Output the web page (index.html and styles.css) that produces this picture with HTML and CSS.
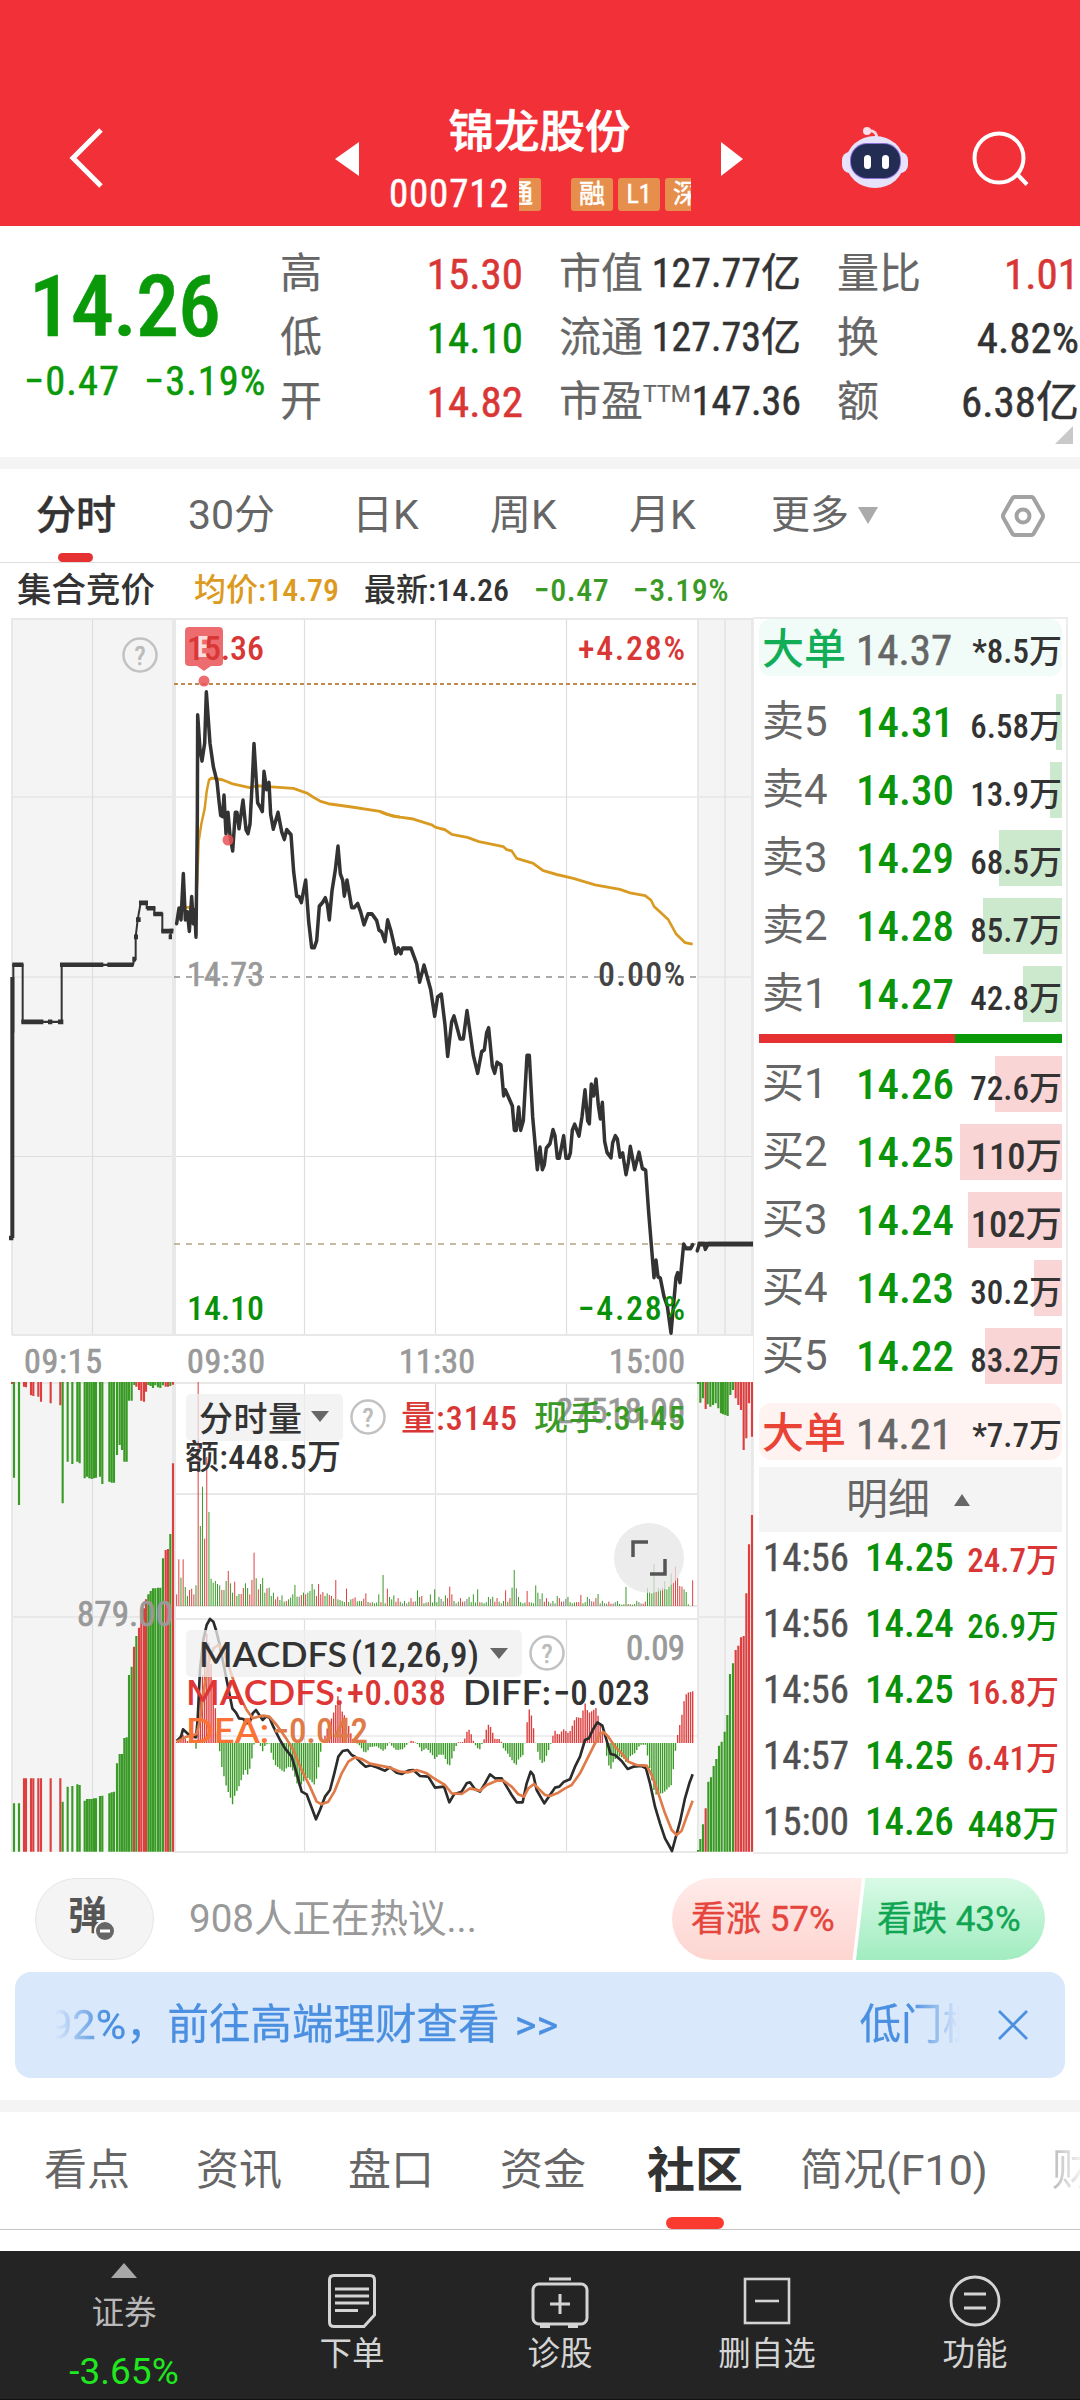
FILE: index.html
```
<!DOCTYPE html>
<html lang="zh-CN">
<head>
<meta charset="utf-8">
<title>锦龙股份 000712</title>
<link rel="stylesheet" href="styles.css">
</head>
<body>
<div class="app">
  <header class="header">
    <svg class="back" width="36" height="64" viewBox="0 0 36 64"><path d="M32 4L4 32L32 60" fill="none" stroke="#fff" stroke-width="5"/></svg>
    <svg class="prev" width="24" height="34" viewBox="0 0 24 34"><path d="M24 0V34L0 17Z" fill="#fff"/></svg>
    <div class="stock">
      <h1 class="stock-name">锦龙股份</h1>
      <div class="stock-sub">
        <span class="code">000712</span>
        <div class="tags"><span class="tag tag-first">通</span><span class="tag">融</span><span class="tag">L1</span><span class="tag">深</span></div>
      </div>
    </div>
    <svg class="next" width="22" height="34" viewBox="0 0 22 34"><path d="M0 0V34L22 17Z" fill="#fff"/></svg>
    <svg class="robot" width="68" height="64" viewBox="0 0 68 64">
      <path d="M26 5Q36 3 36 14" fill="none" stroke="#f6d5e2" stroke-width="3"/><circle cx="26" cy="5" r="4" fill="#f9dfe9"/>
      <rect x="1" y="26" width="66" height="21" rx="8" fill="#e9e4fb"/>
      <ellipse cx="34" cy="36" rx="29" ry="26" fill="#e6e2fa"/>
      <rect x="9" y="17" width="51" height="36" rx="17" fill="#8d6fd8"/>
      <rect x="10" y="18" width="49" height="34" rx="16" fill="#232c52"/>
      <rect x="23" y="29" width="7" height="14" rx="3.500" fill="#fff"/><rect x="41" y="29" width="7" height="14" rx="3.500" fill="#fff"/>
    </svg>
    <svg class="search" width="60" height="60" viewBox="0 0 60 60"><g fill="none" stroke="#fff" stroke-width="4"><circle cx="28" cy="28" r="24.500"/><path d="M45 43L56 54.500"/></g></svg>
  </header>

  <section class="quote">
    <div class="quote-main">
      <div class="last">14.26</div>
      <div class="change"><span>−0.47</span><span>−3.19%</span></div>
    </div>
    <dl class="stats">
      <div class="stat"><dt>高</dt><dd class="up">15.30</dd></div>
      <div class="stat"><dt>市值</dt><dd class="cap">127.77亿</dd></div>
      <div class="stat"><dt>量比</dt><dd class="up">1.01</dd></div>
      <div class="stat"><dt>低</dt><dd class="down">14.10</dd></div>
      <div class="stat"><dt>流通</dt><dd class="cap">127.73亿</dd></div>
      <div class="stat"><dt>换</dt><dd>4.82%</dd></div>
      <div class="stat"><dt>开</dt><dd class="up">14.82</dd></div>
      <div class="stat"><dt>市盈<sup>TTM</sup></dt><dd class="cap">147.36</dd></div>
      <div class="stat"><dt>额</dt><dd>6.38亿</dd></div>
    </dl>
    <svg class="corner" width="18" height="18" viewBox="0 0 18 18"><path d="M18 0V18H0Z" fill="#c9c9c9"/></svg>
  </section>

  <nav class="periods">
    <span class="period active">分时</span>
    <span class="period">30分</span>
    <span class="period">日K</span>
    <span class="period">周K</span>
    <span class="period">月K</span>
    <span class="period more">更多<svg width="20" height="17" viewBox="0 0 20 17"><path d="M0 0H20L10 17Z" fill="#aaa"/></svg></span>
    <svg class="gear" width="46" height="44" viewBox="0 0 46 44"><g fill="none" stroke="#a2a2a2" stroke-width="4"><path d="M14 3H32Q33 3 34 5L42.500 20Q43.500 22 42.500 24L34 39Q33 41 32 41H14Q13 41 12 39L3.500 24Q2.500 22 3.500 20L12 5Q13 3 14 3Z"/><circle cx="23" cy="22" r="6.500"/></g></svg>
  </nav>

  <div class="legend">
    <span class="legend-title">集合竞价</span>
    <span class="avg">均价:14.79</span>
    <span class="newest">最新:14.26</span>
    <span class="delta">−0.47</span>
    <span class="pct">−3.19%</span>
  </div>

  <main class="board">
    <svg class="chart" width="753" height="1238" viewBox="0 618 753 1238">
      <g fill="#f4f4f4">
        <path d="M12 619H174V1335H12ZM697 619H753V1335H697ZM12 1383H174V1852H12ZM697 1383H753V1852H697Z"/>
      </g>
      <g stroke="#dedede" stroke-width="1.200" fill="none">
        <path d="M92.500 619V1335M92.500 1383V1852M304.500 619V1335M304.500 1383V1606M304.500 1619V1852M435.500 619V1335M435.500 1383V1606M435.500 1619V1852M566.500 619V1335M566.500 1383V1606M566.500 1619V1852M725 619V1335M725 1383V1852"/>
        <path d="M12 797H753M12 977H174M697 977H753M12 1156.500H753M174 1736H697"/>
      </g>
      <g stroke="#e8e8e8" stroke-width="2" fill="none">
        <path d="M11 619H753M12 619V1335M12 1335H753M698 619V1335M752 619V1335M11 1383H753M12 1383V1852M698 1383V1852M752 1383V1852M174 1494H697M174 1606H697M174 1619H697M174 1852H697M12 1617H174M697 1617H753"/>
        <path d="M174 619V1335M174 1383V1852" stroke-width="4"/>
      </g>
      <path d="M174 684H697" stroke="#c08a4e" stroke-width="2" stroke-dasharray="4 3"/>
      <path d="M174 977H697" stroke="#8f8f8f" stroke-width="1.700" stroke-dasharray="6 6"/>
      <path d="M174 1244H697" stroke="#b5a284" stroke-width="1.700" stroke-dasharray="6 6"/>

      <g font-size="34" class="num firm">
        <text x="187" y="986" fill="#999" stroke="#999" textLength="77">14.73</text>
      </g>

      <g class="line">
        <g transform="translate(0 780) scale(.333333 .382653)">
          <path class="avg-line" d="M555 333H570L585 380L592 260L596 160L604 115L614 75L620 30L627 0L635 -5L647 -4L669 0L698 10L749 20L771 15L814 18L880 22L923 35L940 45L960 55L985 62L1050 70L1140 82L1180 95L1200 97"/>
          <path class="price-line" d="M530 375L537 335L543 365L550 245L556 365L562 345L568 395L575 305L580 375L584 340L588 410L592 100L593 -170L600 -80L606 -50L614 -96L619 -230L630 -96L640 -35L651 4L657 55L662 92L668 95L672 40L678 140L684 85L690 145L698 185L706 85L711 85L717 127L729 53L738 130L744 140L750 115L757 0L762 -95L773 60L780 70L787 82L792 -22L800 25L807 7L812 90L820 128L834 85L845 135L853 155L860 130L873 143L881 240L890 303L897 305L904 320L917 262L926 370L935 438L943 438L950 420L958 330L968 320L976 308L982 325L988 365L996 290L1006 235L1014 173L1021 245L1028 262L1033 303L1041 262L1055 333L1063 333L1073 323L1082 345L1092 378L1104 350H1116L1130 367L1137 392L1145 397L1155 422L1163 366L1173 395L1188 453L1195 440L1203 453"/>
          <path class="auction-line" d="M40 660V483H68V632H185V483H399L403 468H407V410L413 365L422 321H440V334H463V350H487V395H512V410V392H520"/>
          <path class="auction-dots" d="M37 515V1197M27 1197H40M37 483H70M64 632H130M144 632H157M174 632H190M180 483H310M322 483H400M397 468H408M402 410H414M408 365H422M417 321H444M440 335H466M460 350H488M484 395H520M506 410H516"/>
        </g>
        <g transform="translate(380 780) scale(.333333 .382653)">
          <path class="avg-line" d="M0 83L20 90L60 97L100 102L155 117L165 123L195 130L215 142L262 150L297 161L370 174L380 182L395 185L410 205L460 218L490 237L530 247L580 257L645 274L720 286L750 295L795 302L813 314L822 330L865 365L888 402L915 425L938 429"/>
          <path class="price-line" d="M47 453L55 440L62 453L68 440H93L110 480L119 528L132 484L152 548L164 617L173 567L184 560L195 640L203 722L215 632L222 617L240 676H250L261 603L280 720L293 766L305 710L313 705L320 660L326 648L337 748L344 766L351 738L363 745L371 825L376 810L397 852L403 915H409L416 855L422 915L430 890L441 720H448L458 880L472 1018L480 960L487 1018L493 1005L499 962L510 950L519 914L525 930L532 988H538L551 930L558 988H566L571 975L577 915L584 900L597 930L606 880L615 810L623 890L628 898L634 795L641 825L648 782L655 850L661 885L667 843L674 945L681 973L693 987L698 948L706 930L712 938L720 985L728 975L738 1031L745 1000L751 958L764 1018L777 973L787 1015L797 1020L806 1130L822 1300L828 1255L834 1298L841 1302L852 1350L862 1375L873 1445L888 1300L893 1288L900 1313L911 1213L918 1224H932L938 1215M952 1230L958 1212H972L976 1226L985 1212H1119"/>
          <path class="auction-dots" d="M953 1213H1119"/>
        </g>
      </g>

      <g fill="#ea5257" fill-opacity=".85"><path d="M189 627H219Q223 627 223 631V662Q223 666 219 666H211L204 671L197 666H189Q185 666 185 662V631Q185 627 189 627Z"/><circle cx="204" cy="681" r="5.500"/><circle cx="228" cy="840" r="5.500"/></g>
      <text x="196" y="657" font-size="30" font-weight="700" fill="#fff" fill-opacity=".8" class="num">E</text>

      <g font-size="34" class="num" font-weight="500">
        <text x="187" y="660" fill="#d93636" textLength="77">15.36</text>
        <text x="578" y="660" fill="#d93636" textLength="107">+4.28%</text>
        <text x="598" y="986" fill="#444" textLength="87">0.00%</text>
        <text x="187" y="1320" fill="#099009" textLength="77">14.10</text>
        <text x="578" y="1320" fill="#099009" textLength="107">−4.28%</text>
      </g>
      <g font-size="34" class="num firm" fill="#999" stroke="#999">
        <text x="24" y="1373" textLength="78">09:15</text><text x="187" y="1373" textLength="78">09:30</text><text x="399" y="1373" textLength="76">11:30</text><text x="609" y="1373" textLength="76">15:00</text>
      </g>

      <g id="bars"></g>

      <g class="macd">
        <g transform="translate(0 1360) scale(.333333)">
          <path class="diff-line" d="M530 1143L543 1130L549 1108L560 1118L570 1128L588 1132L593 1080L600 930L610 840L620 795L630 777L640 785L648 810L658 850L668 900L680 960L690 1010L697 1045L708 1058L717 1075L730 1077L740 1090L750 1085L758 1060L768 1050L778 1065L788 1080L798 1070L808 1072L820 1100L840 1140L855 1165L875 1190L890 1240L905 1295L920 1303L932 1335L948 1378L960 1350L975 1310L990 1290L1003 1240L1015 1190L1028 1173L1043 1170L1055 1185L1065 1190L1080 1205L1097 1220L1115 1215L1128 1220"/>
          <path class="dea-line" d="M530 1145L560 1130L590 1122L600 1080L610 1000L625 910L640 865L655 855L670 870L685 915L700 960L720 1010L740 1050L758 1075L775 1070L790 1067L808 1070L830 1095L855 1130L880 1170L905 1230L930 1280L950 1325L965 1333L985 1325L1003 1295L1025 1240L1045 1205L1065 1192L1085 1197L1110 1211"/>
        </g>
        <g transform="translate(370 1360) scale(.333333)">
          <path class="diff-line" d="M0 1215L20 1222L45 1232L60 1222L80 1238L95 1242L115 1232L130 1230L150 1248L175 1250L195 1283L222 1280L238 1327L252 1303L275 1295L290 1270L300 1267L315 1288L330 1295L345 1270L360 1243L375 1255L395 1255L410 1280L425 1305L440 1327L458 1327L470 1270L482 1235L490 1245L500 1290L523 1330L540 1305L555 1283L568 1280L582 1265L600 1258L615 1220L630 1190L645 1140L657 1135L668 1110L682 1087L697 1097L705 1125L722 1182L735 1185L755 1203L773 1227L790 1220L815 1218L828 1225L840 1270L855 1340L870 1390L885 1435L898 1458L906 1473L915 1440L930 1385L945 1315L958 1270L968 1243"/>
          <path class="dea-line" d="M0 1211L30 1217L60 1223L90 1235L115 1237L140 1230L170 1240L195 1257L225 1275L245 1300L275 1302L300 1285L330 1292L350 1275L380 1262L400 1262L425 1280L445 1303L462 1310L475 1285L492 1272L505 1285L525 1305L540 1308L565 1298L585 1285L605 1275L630 1240L655 1190L675 1150L690 1120L702 1117L715 1130L735 1160L755 1180L775 1205L800 1215L830 1217L845 1245L865 1300L885 1360L905 1410L920 1425L935 1412L950 1370L968 1322"/>
        </g>
      </g>

      <g fill="#efefef" fill-opacity=".75"><rect x="186" y="1394" width="157" height="47" rx="5"/><rect x="186" y="1630" width="336" height="47" rx="5"/><circle cx="649" cy="1558" r="35" fill="#e6e6e6"/></g>
      <path d="M633 1557V1542H648M650 1574H665V1559" fill="none" stroke="#555" stroke-width="3.500"/>
      <g fill="#666"><path d="M311 1411H329L320 1422Z"/><path d="M490 1648H508L499 1659Z"/></g>
      <g fill="none" stroke="#c2c2c2" stroke-width="2.500"><circle cx="140" cy="655" r="16.500"/><circle cx="368" cy="1417" r="16.500"/><circle cx="547" cy="1653" r="16.500"/></g>
      <g class="num firm" font-size="26" fill="#bbb" stroke="#bbb" text-anchor="middle"><text x="140" y="665">?</text><text x="368" y="1427">?</text><text x="547" y="1663">?</text></g>

      <g class="num firm" font-size="35" fill="#999" stroke="#999">
        <text x="556" y="1423" textLength="129">27518.00</text>
        <text x="77" y="1626" textLength="96">879.00</text>
        <text x="626" y="1660" textLength="59">0.09</text>
      </g>
      <g class="num" font-size="34" font-weight="500" fill="#333">
        <text x="199" y="1431" textLength="103">分时量</text>
        <text x="401" y="1430" textLength="116" fill="#d93636">量:3145</text>
        <text x="534" y="1430" textLength="151" fill="#3a9a26">现手:3145</text>
        <text x="185" y="1469" textLength="156">额:448.5万</text>
      </g>
      <g class="latin" font-size="35" fill="#333">
        <text x="199" y="1667" textLength="148" lengthAdjust="spacingAndGlyphs">MACDFS</text>
        <text x="351" y="1667" textLength="128" class="num" font-weight="500">(12,26,9)</text>
        <text x="186" y="1705" textLength="158" lengthAdjust="spacingAndGlyphs" fill="#e03636">MACDFS:</text>
        <text x="347" y="1705" textLength="99" class="num" font-weight="500" fill="#d93636">+0.038</text>
        <text x="463" y="1705" textLength="88" lengthAdjust="spacingAndGlyphs">DIFF:</text>
        <text x="553" y="1705" textLength="97" class="num" font-weight="500">−0.023</text>
        <text x="186" y="1743" textLength="83" lengthAdjust="spacingAndGlyphs" fill="#fb7237">DEA:</text>
        <text x="272" y="1743" textLength="96" class="num" font-weight="500" fill="#e07a48">−0.042</text>
      </g>
    </svg>

    <aside class="depth">
      <div class="big big-sell"><b>大单</b><span class="p">14.37</span><span class="v">*8.5万</span></div>
      <div class="levels sell">
        <div class="level"><i style="width:6px"></i><span class="n">卖5</span><span class="p">14.31</span><span class="v">6.58万</span></div>
        <div class="level"><i style="width:12px"></i><span class="n">卖4</span><span class="p">14.30</span><span class="v">13.9万</span></div>
        <div class="level"><i style="width:63px"></i><span class="n">卖3</span><span class="p">14.29</span><span class="v">68.5万</span></div>
        <div class="level"><i style="width:79px"></i><span class="n">卖2</span><span class="p">14.28</span><span class="v">85.7万</span></div>
        <div class="level"><i style="width:39px"></i><span class="n">卖1</span><span class="p">14.27</span><span class="v">42.8万</span></div>
      </div>
      <div class="ratio"></div>
      <div class="levels buy">
        <div class="level"><i style="width:67px"></i><span class="n">买1</span><span class="p">14.26</span><span class="v">72.6万</span></div>
        <div class="level"><i style="width:102px"></i><span class="n">买2</span><span class="p">14.25</span><span class="v v3">110万</span></div>
        <div class="level"><i style="width:94px"></i><span class="n">买3</span><span class="p">14.24</span><span class="v v3">102万</span></div>
        <div class="level"><i style="width:28px"></i><span class="n">买4</span><span class="p">14.23</span><span class="v">30.2万</span></div>
        <div class="level"><i style="width:77px"></i><span class="n">买5</span><span class="p">14.22</span><span class="v">83.2万</span></div>
      </div>
      <div class="big big-buy"><b>大单</b><span class="p">14.21</span><span class="v">*7.7万</span></div>
      <div class="detail-head">明细<svg width="16" height="12" viewBox="0 0 16 12"><path d="M0 12H16L8 0Z" fill="#666"/></svg></div>
      <div class="trades">
        <div class="trade"><span>14:56</span><span class="tp">14.25</span><span class="tv up">24.7万</span></div>
        <div class="trade"><span>14:56</span><span class="tp">14.24</span><span class="tv down">26.9万</span></div>
        <div class="trade"><span>14:56</span><span class="tp">14.25</span><span class="tv up">16.8万</span></div>
        <div class="trade"><span>14:57</span><span class="tp">14.25</span><span class="tv up">6.41万</span></div>
        <div class="trade"><span>15:00</span><span class="tp">14.26</span><span class="tv down tv-lg">448万</span></div>
      </div>
    </aside>
  </main>

  <section class="talk">
    <div class="danmu">弹<svg width="22" height="22" viewBox="0 0 22 22"><circle cx="11" cy="11" r="10" fill="#666" stroke="#f4f4f4" stroke-width="2"/><path d="M6 11H16" stroke="#fff" stroke-width="3"/></svg></div>
    <div class="talk-text">908人正在热议...</div>
    <div class="vote"><span class="bull">看涨 57%</span><span class="bear">看跌 43%</span></div>
  </section>

  <section class="banner">
    <div class="marquee"><span class="msg">92%，前往高端理财查看 &gt;&gt;</span><span class="msg-next">低门槛</span></div>
    <svg class="close" width="30" height="30" viewBox="0 0 30 30"><path d="M1 1L29 29M29 1L1 29" stroke="#4a8fe0" stroke-width="2.800"/></svg>
  </section>

  <nav class="tabs">
    <span class="tab">看点</span><span class="tab">资讯</span><span class="tab">盘口</span><span class="tab">资金</span><span class="tab current">社区</span><span class="tab">简况(F10)</span><span class="tab fading">财务</span>
  </nav>

  <footer class="toolbar">
    <div class="tool index-tool"><svg width="26" height="15" viewBox="0 0 26 15"><path d="M0 15H26L13 0Z" fill="#a8a8a8"/></svg><span class="idx-name">证券</span><span class="idx-pct">-3.65%</span></div>
    <div class="tool"><svg width="60" height="58" viewBox="0 0 60 58"><g fill="none" stroke="#d4d4d4" stroke-width="3"><path d="M12 3.500H48Q52.500 3.500 52.500 8V43L42 54.500H12Q7.500 54.500 7.500 50V8Q7.500 3.500 12 3.500Z"/><path d="M13 17H47M13 24H47M13 31H47M13 38.500H36"/></g></svg><span>下单</span></div>
    <div class="tool"><svg width="60" height="58" viewBox="0 0 60 58"><g fill="none" stroke="#d4d4d4" stroke-width="3"><rect x="3" y="12" width="54" height="40" rx="6"/><path d="M19 7H41M10 54.500H20M38 54.500H48M20 32H40M30 22V42"/></g></svg><span>诊股</span></div>
    <div class="tool"><svg width="60" height="58" viewBox="0 0 60 58"><g fill="none" stroke="#d4d4d4" stroke-width="2.600"><rect x="8" y="7" width="44" height="44"/><path d="M18 29H42"/></g></svg><span>删自选</span></div>
    <div class="tool"><svg width="60" height="58" viewBox="0 0 60 58"><g fill="none" stroke="#d4d4d4" stroke-width="2.800"><circle cx="30" cy="29" r="24"/><path d="M19 22H41M19 36H41"/></g></svg><span>功能</span></div>
  </footer>
</div>
<script src="chart.js"></script>
</body>
</html>
```
FILE: styles.css
```
* { box-sizing: border-box; margin: 0; padding: 0; }
body { background: #fff; width: 1080px; height: 2400px; overflow: hidden; font-family: "Roboto Condensed", "Noto Sans CJK SC", sans-serif; color: #333; }
svg { display: block; flex: none; }
i { font-style: normal; }
.app { width: 1080px; height: 2400px; display: flex; flex-direction: column; overflow: hidden; }
.app > * { flex: none; }
.up { color: #d93636; }
.down { color: #099009; }

.header { height: 226px; padding-top: 90px; background: #f13038; display: flex; align-items: flex-start; color: #fff; }
.back { margin: 36px 0 0 69px; }
.prev { margin: 52px 0 0 230px; }
.stock { width: 304px; margin: 16px 28px 0 30px; }
.stock-name { font-size: 45.500px; line-height: 54px; font-weight: 500; text-align: center; text-indent: -3px; -webkit-text-stroke: .6px; }
.stock-sub { display: flex; align-items: center; margin-top: 17px; height: 34px; -webkit-text-stroke: .5px; }
.code { font-size: 39px; letter-spacing: .8px; line-height: 34px; width: 130px; }
.tags { width: 172px; height: 33px; display: flex; gap: 5px; overflow: hidden; }
.tag { flex: none; width: 42px; height: 33px; border-radius: 3px; background: #e68f4c; font-size: 26px; line-height: 32px; text-align: center; }
.tag-first { margin: 0 25px 0 -20px; }
.next { margin: 52px 0 0; }
.robot { margin: 36px 0 0 98px; }
.search { margin: 40px 0 0 62px; }

.quote { height: 231px; position: relative; display: flex; -webkit-text-stroke: .5px; }
.quote-main { width: 280px; color: #099909; }
.last { margin: 35px 0 0 29px; font-size: 86px; line-height: 92px; font-weight: 500; letter-spacing: -1px; }
.change { display: flex; gap: 24px; padding-left: 24px; font-size: 40.500px; line-height: 57px; letter-spacing: 1px; white-space: nowrap; }
.stats { width: 800px; padding-top: 16px; display: grid; grid-template-columns: 243px 242px 242px; column-gap: 36px; grid-auto-rows: 64px; }
.stat { display: flex; justify-content: space-between; align-items: center; line-height: 64px; white-space: nowrap; font-size: 42px; }
.stat dt { color: #666; font-weight: 400; -webkit-text-stroke: .2px; }
.stat dt sup { font-size: 23px; line-height: 20px; vertical-align: 14px; font-family: Roboto; }
.stat dd { font-size: 43px; }
.stat .cap { font-size: 40px; }
.corner { position: absolute; right: 7px; bottom: 13px; }

.periods { height: 106px; border-top: 12px solid #f4f4f4; border-bottom: 1px solid #ddd; padding-left: 36px; display: flex; align-items: stretch; font-family: Roboto, "Noto Sans CJK SC", sans-serif; font-size: 41px; line-height: 93px; color: #666; }
.period { width: 165px; display: flex; justify-content: flex-start; margin-right: -14px; }
.period.active { color: #333; font-weight: 500; width: 166px; font-size: 40px; position: relative; -webkit-text-stroke: .4px; }
.period.active::after { content: ""; position: absolute; left: 22px; bottom: 0; width: 35px; height: 9px; border-radius: 5px; background: #e53131; }
.period:nth-child(2) { width: 178px; }
.period:nth-child(3) { width: 152px; }
.period:nth-child(4) { width: 153px; }
.period:nth-child(5) { width: 156px; }
.period.more { width: 243px; font-size: 39px; align-items: center; gap: 9px; line-height: 93px; }
.gear { margin-top: 25px; }

.legend { height: 55px; padding-left: 17px; display: grid; grid-template-columns: 177px 170px 170px 99px 1fr; line-height: 55px; font-size: 32px; white-space: nowrap; font-weight: 500; }
.legend-title { font-size: 34.500px; }
.avg { color: #dc9a1e; }
.delta, .pct { color: #3a9a26; letter-spacing: .5px; }

.board { height: 1238px; display: flex; }
.num { font-family: "Roboto Condensed", "Noto Sans CJK SC", sans-serif; }
.firm { stroke-width: .7px; }
.latin { font-family: Lato, sans-serif; font-weight: 600; }
.price-line { fill: none; stroke: #333; stroke-width: 10.500; stroke-linejoin: round; stroke-linecap: round; }
.avg-line { fill: none; stroke: #d99a22; stroke-width: 7.500; stroke-linejoin: round; }
.auction-line { fill: none; stroke: #333; stroke-width: 6; }
.auction-dots { fill: none; stroke: #333; stroke-width: 12; }
.diff-line { fill: none; stroke: #2c2c2c; stroke-width: 8; stroke-linejoin: round; }
.dea-line { fill: none; stroke: #e07a48; stroke-width: 8; stroke-linejoin: round; }
.rise { fill: none; stroke: #dd3e3e; }
.fall { fill: none; stroke: #3a9a26; }
.flat { fill: none; stroke: #777; }

.depth { width: 315px; height: 1237px; margin-top: -1px; border: 2px solid #ececec; border-left-width: 1px; padding: 0 4px 0 5px; }
.big { height: 57px; border-radius: 12px; display: grid; grid-template-columns: 95px 1fr auto; padding-left: 3px; align-items: center; line-height: 56px; }
.big b { font-size: 42px; font-weight: 500; }
.big .p { color: #666; font-weight: 400; -webkit-text-stroke: .5px; }
.big-sell { background: #f1fbf7; }
.big-sell b { color: #11ad57; }
.big-buy { margin-top: 13px; background: #fff3f2; }
.big-buy b { color: #ea4235; }
.p { font-size: 43px; padding-left: 0; margin-left: -1px; }
.v { font-size: 33px; text-align: right; padding-top: 5px; font-weight: 500; }
.levels { display: flex; flex-direction: column; }
.sell { margin-top: 12px; }
.level { position: relative; height: 68px; display: grid; grid-template-columns: 95px 1fr auto; padding-left: 3px; line-height: 68px; }
.level i { position: absolute; right: 0; top: 6px; height: 56px; }
.sell i { background: #cce9cd; }
.buy i { background: #f9d5d5; }
.level span { position: relative; }
.n { font-size: 42px; color: #666; font-family: Roboto, "Noto Sans CJK SC", sans-serif; }
.level .p { color: #0a950a; font-weight: 500; }
.v3 { font-size: 36.500px; }
.ratio { height: 9px; margin: 6px 0 7px; background: linear-gradient(90deg, #e53131 0 196px, #099909 196px); }
.detail-head { height: 65px; margin-top: 7px; background: #f4f4f4; display: flex; align-items: center; padding-left: 87px; gap: 24px; font-size: 42px; line-height: 66px; color: #666; }
.trade { height: 66px; display: grid; grid-template-columns: 102px 1fr auto; padding: 1px 3px 0 4px; font-size: 39px; line-height: 51px; color: #505050; -webkit-text-stroke: .4px; }
.tp { color: #099009; font-weight: 500; -webkit-text-stroke: 0; }
.tv { font-size: 33px; padding-top: 2px; font-weight: 500; -webkit-text-stroke: 0; }
.tv-lg { font-size: 36.500px; }

.talk { height: 104px; margin-top: 12px; padding: 10px 35px 0; display: flex; align-items: flex-start; }
.danmu { width: 119px; height: 82px; border-radius: 41px; background: #f4f4f4; border: 1px solid #e6e6e6; padding-left: 32px; font-size: 39px; line-height: 74px; font-weight: 700; color: #555; display: flex; }
.danmu svg { margin: 41px 0 0 -13px; position: relative; }
.talk-text { margin-left: 35px; flex: 1; font-size: 38.500px; line-height: 82px; color: #999; font-family: Roboto, "Noto Sans CJK SC", sans-serif; }
.vote { width: 373px; height: 82px; border-radius: 41px; overflow: hidden; display: flex; font-family: Roboto, "Noto Sans CJK SC", sans-serif; font-size: 35px; line-height: 83px; white-space: nowrap; -webkit-text-stroke: .4px; }
.bull { width: 190px; margin-right: -6px; padding-left: 19px; color: #e5453c; background: linear-gradient(#ffebe9, #fdd5d1); clip-path: polygon(0 0, 100% 0, 95% 100%, 0 100%); }
.bear { width: 189px; padding-left: 21px; color: #10a552; background: linear-gradient(#d9fae6, #a1ecc0); clip-path: polygon(5% 0, 100% 0, 100% 100%, 0 100%); }

.banner { margin: 0 15px; height: 106px; border-radius: 16px; background: #dae8fb; color: #4a8fe0; display: flex; align-items: center; font-size: 41.500px; line-height: 100px; font-family: Roboto, "Noto Sans CJK SC", sans-serif; -webkit-text-stroke: .3px; }
.marquee { width: 905px; margin-left: 40px; overflow: hidden; display: flex; justify-content: space-between; white-space: nowrap; -webkit-mask-image: linear-gradient(90deg, transparent, #000 50px, #000 855px, transparent); mask-image: linear-gradient(90deg, transparent, #000 50px, #000 855px, transparent); }
.msg { margin-left: -6px; word-spacing: 5px; }
.msg-next { margin-right: -24px; }
.close { margin-left: 38px; }

.tabs { margin-top: 22px; height: 130px; border-top: 12px solid #f4f4f4; border-bottom: 1px solid #c4c4c4; display: flex; gap: 66px; padding-left: 44px; font-size: 43px; line-height: 117px; color: #666; white-space: nowrap; overflow: hidden; }
.tab { flex: none; }
.current { position: relative; font-size: 48px; font-weight: 700; color: #333; margin: 0 -9px 0 -5px; }
.current::after { content: ""; position: absolute; left: 19px; bottom: 0; width: 58px; height: 12px; border-radius: 6px; background: #fb3a30; }
.tab:nth-child(6) { font-family: Roboto, "Noto Sans CJK SC", sans-serif; }
.fading { margin-left: -2px; background: linear-gradient(90deg, #bbb, #fff 36px); -webkit-background-clip: text; background-clip: text; color: transparent; }

.toolbar { margin-top: 21px; height: 149px; background: #242424; border-bottom: 1px solid #151015; display: grid; grid-template-columns: 248px 208px 208px 206px 210px; color: #d4d4d4; font-size: 32.500px; line-height: 42px; }
.tool { display: flex; flex-direction: column; align-items: center; padding-top: 21px; gap: 3px; }
.index-tool { padding-top: 12px; gap: 0; color: #b8b8b8; }
.idx-name { margin-top: 14px; }
.idx-pct { margin-top: 17px; color: #1fe81f; font-family: Roboto, sans-serif; font-size: 37px; }
```
FILE: chart.js
```
// Bars are listed in thirds of a pixel, measured from y = 1360.
const out = { rise: [], fall: [], flat: [] };
const bar = (kind, x, y0, y1, w) => out[kind].push([x, y0, y1, w]);

// Call-auction panels: colour and x, then the tip of a hanging or standing bar.
const hang = 'g42 353 g57 435 g188 430 g203 305 g217 312 g232 305 g239 310 g254 355 g261 350 g268 355 g275 357 g282 355 g288 353 g300 350 g307 372 g328 365 g335 368 g342 368 g351 285 g359 255 g366 270 g373 305 g380 305 g387 122 g395 122 g403 75 r36 72 r72 80 r78 82 r93 106 r100 108 r115 110 r123 125 r152 130 r181 136 r409 80 r417 90 r424 122 r432 125 r438 95 g445 75 g452 78 g459 84 g466 76 g474 82 g481 84 g489 76 r497 80 r504 80 g511 78 r519 74';
const stand = 'g42 1330 g57 1330 r72 1255 r78 1255 r93 1255 r100 1255 r115 1255 r123 1255 r152 1255 r181 1255 g188 1325 g203 1280 g217 1278 g232 1273 g239 1275 g254 1322 g261 1317 g268 1317 g275 1317 g282 1315 g288 1315 g300 1308 g307 1307 g328 1300 g335 1297 g342 1295 g351 1210 g359 1182 g366 1182 g373 1134 g380 1132 g387 945 g395 920 r402 860 g409 828 r417 803 r424 775 r432 745 r438 718 g445 703 g452 693 g459 685 g466 685 g474 683 g481 683 g489 595 r497 570 r504 567 g511 522 r519 310';
const hangR = 'g984 72 g991 128 g999 115 r1007 147 g1013 133 g1021 140 g1029 135 g1037 130 g1045 145 g1053 160 g1059 163 g1066 165 g1073 168 g1081 105 g1089 90 r1097 115 r1105 135 r1113 150 r1121 270 r1129 235 r1137 130 r1146 230';
const standR = 'g984 1470 g991 1437 g999 1393 r1007 1345 g1015 1265 g1023 1252 g1031 1218 g1039 1197 g1047 1157 g1055 1145 g1064 1115 g1072 1065 g1080 942 g1089 910 r1097 870 r1105 857 r1113 832 r1121 828 r1129 700 r1137 553 r1146 465';
const panel = (str, base, dx) => {
  for (const m of str.matchAll(/([gr])(\d+) (\d+)/g)) bar(m[1] === 'r' ? 'rise' : 'fall', +m[2] + dx, base, +m[3], 6.4);
};
panel(hang, 66, 0);
panel(stand, 1475, 0);
panel(hangR, 66, 1110);
panel(standR, 1475, 1110);

// Minute volume: keyed peaks, quiet minutes stay low.
const step = 6.45, x0 = 530;
const peaks = {0:'r35',1:'r140',2:'g85',3:'r140',4:'g57',5:'g30',6:'r48',7:'r52',8:'r35',9:'g62',10:'r672',11:'g240',12:'g358',13:'r202',14:'r447',15:'g282',16:'g82',17:'g70',18:'g75',19:'g66',20:'g62',21:'r48',22:'g48',23:'g75',24:'r105',25:'g68',26:'g40',27:'r73',28:'g30',29:'g36',30:'r36',31:'r54',32:'g68',33:'g54',34:'r35',35:'r78',36:'r160',37:'g83',38:'r50',39:'g66',40:'g84',41:'g40',42:'r53',43:'g55',44:'g30',45:'g40',46:'r20',47:'r28',48:'g18',49:'g32',50:'g13',51:'r15',52:'g20',53:'g25',54:'g35',55:'g63',56:'g28',57:'n28',58:'r33',59:'g40',60:'r35',61:'g40',62:'g45',63:'g66',64:'g50',65:'r30',66:'r66',67:'r35',68:'r42',69:'g30',70:'g38',71:'r33',72:'r30',73:'g22',74:'r78',75:'g20',76:'g18',77:'g15',78:'g12',79:'r52',80:'g12',81:'g20',82:'r22',83:'r26',84:'g14',85:'g15',86:'g15',87:'r22',88:'r38',89:'g12',90:'r10',94:'g35',96:'g93',98:'r52',100:'g20',101:'g32',112:'g47',114:'r30',118:'g35',120:'g50',125:'g32',127:'r58',128:'r35',138:'g35',140:'g50',147:'g28',153:'r47',156:'g55',157:'g108',158:'n53',163:'r45',167:'g62',168:'g40',170:'g38',177:'g30',188:'r33',196:'g36',209:'g57',219:'g54',220:'g43',221:'g38',222:'g125',223:'r42',224:'g54',225:'g50',226:'r55',227:'g75',228:'g50',229:'g58',230:'g97',231:'r70',232:'r118',233:'r85',234:'r60',235:'r58',236:'g50',237:'g42',238:'g5',239:'g0',240:'r77'};
const kinds = { r: 'rise', g: 'fall', n: 'flat' };
for (let i = 0; i <= 240; i++) {
  const quiet = (i * 37 + i * i * 11) % 23;
  const tall = i < 200 ? 8 : 4;
  const p = peaks[i] || 'grgrgn'[quiet % 6] + (tall + (quiet % 17) * (i < 200 ? 1.2 : .7));
  bar(kinds[p[0]], x0 + i * step, 738, 738 - p.slice(1), 3);
}

// MACD histogram: heights interpolated between turning points.
const turns = [530,3, 549,25, 560,5, 575,10, 582,5, 588,-18, 595,60, 601,140, 614,270, 620,330, 627,300, 640,170, 646,105, 652,40, 659,-25, 665,-70, 672,-100, 680,-135, 690,-160, 698,-185, 705,-155, 717,-130, 724,-110, 736,-80, 743,-95, 750,-75, 757,-40, 762,-5, 769,20, 775,5, 782,-10, 788,-25, 795,-8, 807,0, 814,-30, 825,-65, 843,-80, 852,-87, 860,-75, 870,-70, 880,-85, 890,-120, 897,-130, 904,-125, 917,-105, 925,-105, 943,-125, 950,-105, 957,-65, 963,-20, 970,5, 976,25, 982,45, 995,75, 1002,95, 1009,120, 1016,150, 1022,110, 1028,90, 1040,75, 1050,35, 1060,10, 1070,0, 1080,-8, 1092,-28, 1100,-28, 1110,-12, 1130,-10, 1152,-25, 1168,2, 1175,-8, 1190,-22, 1210,-18, 1222,-3, 1235,8, 1245,2, 1255,-5, 1265,-25, 1280,-15, 1300,-40, 1305,-50, 1315,-35, 1332,-35, 1340,-60, 1348,-70, 1356,-45, 1365,-15, 1375,2, 1390,3, 1397,20, 1403,42, 1410,38, 1417,15, 1422,2, 1428,-10, 1438,-22, 1445,-5, 1452,10, 1460,45, 1467,58, 1473,45, 1485,12, 1500,12, 1505,2, 1510,-15, 1522,-30, 1535,-50, 1548,-68, 1555,-50, 1570,-35, 1575,0, 1581,60, 1588,102, 1595,80, 1600,50, 1605,10, 1612,-20, 1620,-50, 1630,-65, 1637,-45, 1650,-10, 1656,10, 1663,40, 1675,22, 1690,42, 1707,28, 1720,60, 1727,78, 1743,75, 1755,120, 1765,90, 1775,95, 1788,105, 1800,60, 1810,15, 1816,-10, 1823,-60, 1832,-80, 1842,-50, 1860,-40, 1870,-45, 1880,-60, 1890,-40, 1905,-30, 1920,-5, 1937,-5, 1943,-40, 1955,-110, 1965,-155, 1990,-150, 2015,-125, 2022,-60, 2028,-10, 2032,20, 2045,80, 2053,130, 2060,150, 2078,155];
for (let i = 0, k = 0; i <= 240; i++) {
  const x = Math.min(x0 + i * step, 2078);
  while (k + 4 < turns.length && turns[k + 2] < x) k += 2;
  const t = (x - turns[k]) / (turns[k + 2] - turns[k]);
  const h = turns[k + 1] + t * (turns[k + 3] - turns[k + 1]);
  bar(h > 0 ? 'rise' : 'fall', x, 1149, 1149 - h, 4.2);
}

const layer = document.getElementById('bars');
layer.setAttribute('transform', 'translate(0 1360) scale(.333333)');
for (const kind in out) {
  for (const w of [3, 4.2, 6.4]) {
    const path = document.createElementNS('http://www.w3.org/2000/svg', 'path');
    path.setAttribute('class', kind);
    path.setAttribute('stroke-width', w);
    path.setAttribute('d', out[kind].filter(b => b[3] === w).map(b => `M${b[0].toFixed(1)} ${b[1]}V${b[2].toFixed(1)}`).join(''));
    layer.append(path);
  }
}
```
